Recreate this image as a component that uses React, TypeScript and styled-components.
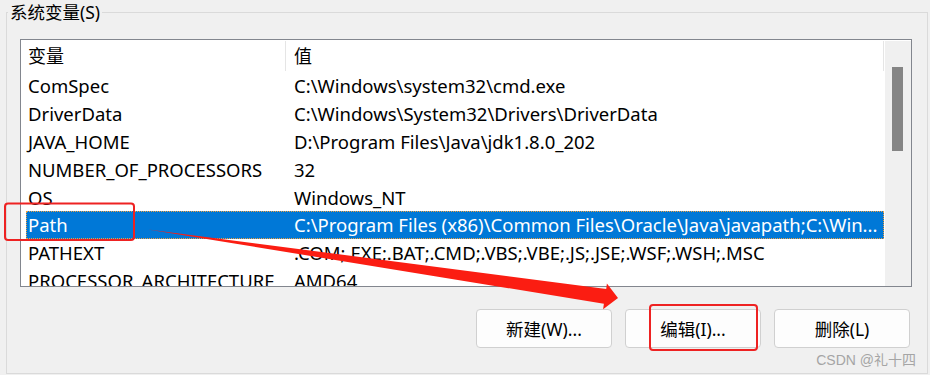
import React from "react";
import styled, { createGlobalStyle } from "styled-components";

const GlobalStyle = createGlobalStyle`
  html, body { margin: 0; padding: 0; background: #f0f0f0; }
  body { font-family: "Noto Sans", "Noto Sans CJK SC", sans-serif; }
  * { box-sizing: border-box; }
`;

const Page = styled.div`
  position: relative;
  width: 930px;
  height: 375px;
  overflow: hidden;
  background: #f0f0f0;
  padding: 0 2px 0 6px;
  font-family: "Noto Sans", "Noto Sans CJK SC", sans-serif;
  color: #000;
`;

const Group = styled.fieldset`
  margin: 0;
  height: 374px;
  border: 1px solid #dadada;
  padding: 0 15px 0 13px;
  min-width: 0;
`;

const Legend = styled.legend`
  margin-left: -12px;
  padding: 0 2px;
  font-size: 17.5px;
  line-height: 24px;
  color: #000;
`;

const ListBox = styled.div`
  margin-top: 15px;
  height: 248px;
  border: 1px solid #82868e;
  background: #fff;
  display: flex;
  overflow: hidden;
`;

const ListContent = styled.div`
  flex: 1;
  min-width: 0;
  padding: 0 1px 0 5px;
  overflow: hidden;
`;

const HeaderRow = styled.div`
  display: flex;
  height: 32px;
`;

const HeaderCell = styled.div<{ $w?: number }>`
  ${(p) => (p.$w ? `width: ${p.$w}px;` : "flex: 1;")}
  height: 30px;
  margin-top: 1px;
  border-right: 1px solid #e5e5e5;
  padding-left: ${(p) => (p.$w ? 2 : 8)}px;
  font-size: 18px;
  line-height: 30px;
  white-space: nowrap;
`;

const Row = styled.div<{ $sel?: boolean }>`
  display: flex;
  height: 27.8px;
  align-items: center;
  font-size: 18.5px;
  white-space: nowrap;
  background: ${(p) => (p.$sel ? "#0078d7" : "transparent")};
  color: ${(p) => (p.$sel ? "#fff" : "#000")};
  outline: ${(p) => (p.$sel ? "1px dotted #f0a040" : "none")};
  outline-offset: -1px;
`;

const NameCell = styled.div`
  width: 260px;
  padding: 0 8px 0 2px;
  overflow: hidden;
`;

const ValueCell = styled.div`
  flex: 1;
  min-width: 0;
  padding-left: 8px;
  overflow: hidden;
`;

const Scrollbar = styled.div`
  width: 26px;
  background: #f0f0f0;
  margin-top: 1px;
  padding: 26px 8px 0 7px;
`;

const Thumb = styled.div`
  height: 84px;
  background: #858585;
`;

const ButtonRow = styled.div`
  display: flex;
  justify-content: flex-end;
  gap: 13px;
  margin-top: 22px;
  padding-right: 2px;
`;

const Button = styled.button`
  width: 136px;
  height: 39px;
  border: 1px solid #d0d0d0;
  border-radius: 4px;
  background: #fdfdfd;
  font-family: "Noto Sans", "Noto Sans CJK SC", sans-serif;
  font-size: 17.5px;
  color: #000;
  padding: 0;
`;

const Watermark = styled.div`
  position: absolute;
  right: 14px;
  bottom: 6px;
  font-family: "Liberation Sans", "Noto Sans CJK SC", sans-serif;
  font-size: 14px;
  color: #a5a5a5;
`;

const Overlay = styled.svg`
  position: absolute;
  left: 0;
  top: 0;
  pointer-events: none;
`;

const rows: [string, string][] = [
  ["ComSpec", "C:\\Windows\\system32\\cmd.exe"],
  ["DriverData", "C:\\Windows\\System32\\Drivers\\DriverData"],
  ["JAVA_HOME", "D:\\Program Files\\Java\\jdk1.8.0_202"],
  ["NUMBER_OF_PROCESSORS", "32"],
  ["OS", "Windows_NT"],
  ["Path", "C:\\Program Files (x86)\\Common Files\\Oracle\\Java\\javapath;C:\\Win..."],
  ["PATHEXT", ".COM;.EXE;.BAT;.CMD;.VBS;.VBE;.JS;.JSE;.WSF;.WSH;.MSC"],
  ["PROCESSOR_ARCHITECTURE", "AMD64"],
];

export default function App() {
  return (
    <>
      <GlobalStyle />
      <Page>
        <Group>
          <Legend>系统变量(S)</Legend>
          <ListBox>
            <ListContent>
              <HeaderRow>
                <HeaderCell $w={260}>变量</HeaderCell>
                <HeaderCell>值</HeaderCell>
              </HeaderRow>
              {rows.map(([n, v]) => (
                <Row key={n} $sel={n === "Path"}>
                  <NameCell>{n}</NameCell>
                  <ValueCell>{v}</ValueCell>
                </Row>
              ))}
            </ListContent>
            <Scrollbar>
              <Thumb />
            </Scrollbar>
          </ListBox>
          <ButtonRow>
            <Button>新建(W)...</Button>
            <Button>编辑(I)...</Button>
            <Button>删除(L)</Button>
          </ButtonRow>
        </Group>
        <Watermark>CSDN @礼十四</Watermark>
        <Overlay width="930" height="375" viewBox="0 0 930 375">
          <rect x="5" y="203.5" width="129" height="36.5" rx="3" fill="none" stroke="#ee2222" strokeWidth="2" />
          <rect x="650" y="305" width="107" height="45" rx="3" fill="none" stroke="#ee2222" strokeWidth="2" />
          <polygon
            points="148,229.5 606.2,288.9 606.9,283.4 618,298 603.1,309.2 603.9,303.7"
            fill="#fb1d12"
          />
        </Overlay>
      </Page>
    </>
  );
}
